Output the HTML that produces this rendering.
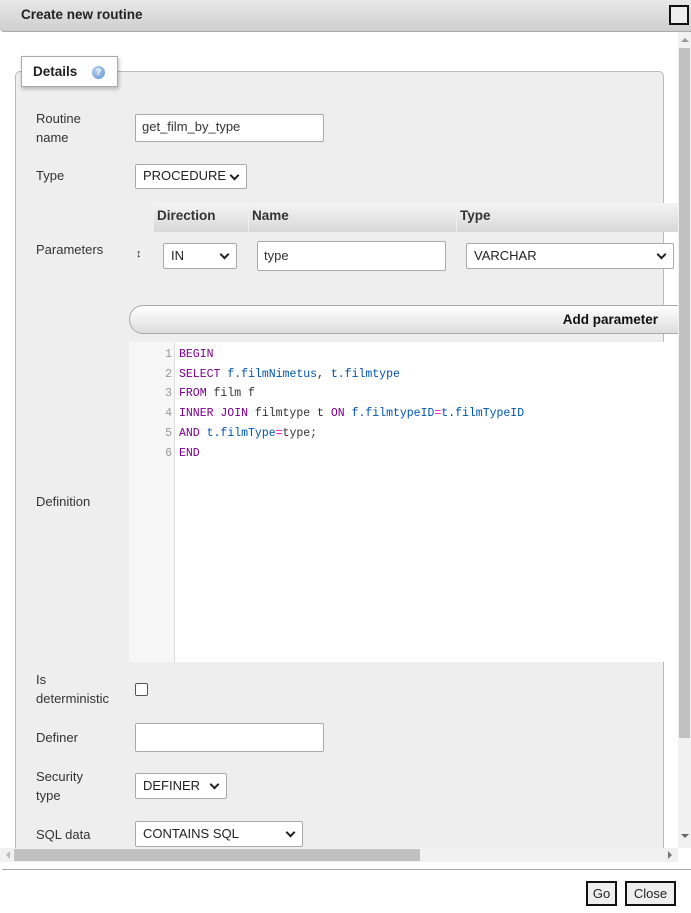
<!DOCTYPE html>
<html><head><meta charset="utf-8"><style>
*{box-sizing:border-box}
body{margin:0;width:691px;height:913px;background:#fff;font-family:"Liberation Sans","DejaVu Sans",sans-serif;font-size:13px;color:#333;position:relative;overflow:hidden}
.a{position:absolute}
.title{left:0;top:0;width:691px;height:32px;background:linear-gradient(#e8e8e8,#cfcfcf);border-bottom:1px solid #aaa;border-radius:0 0 0 4px}
.title b{position:absolute;left:21px;top:7px;font-size:13.5px;color:#222}
.closebox{left:669px;top:5px;width:20px;height:20px;border:2px solid #111;background:#eee}
.fs{left:15px;top:71px;width:649px;height:800px;background:#eee;border:1px solid #bbb;border-radius:5px}
.leg{left:21px;top:56px;width:97px;height:31px;background:#fff;border:1px solid #aaa;box-shadow:1px 2px 4px rgba(0,0,0,.25)}
.leg b{position:absolute;left:11px;top:7px;font-size:13.5px;color:#222}
.help{left:92px;top:66px;width:13px;height:13px;border-radius:50%;background:radial-gradient(circle at 40% 35%,#bcd6f5,#5b8fd3);color:#fff;font-size:9px;font-weight:bold;text-align:center;line-height:13px}
.lbl{left:36px;font-size:13px;color:#333;line-height:19px}
.inp{background:#fff;border:1px solid #aaa;border-radius:2px;font-size:13px;color:#333;padding:0 6px;line-height:24px}
.sel{background:#fff;border:1px solid #aaa;border-radius:2px;font-size:13px;color:#222;padding:0 7px;line-height:22px}
.sel:after{content:"";position:absolute;right:8px;top:7px;width:5px;height:5px;border-right:2px solid #222;border-bottom:2px solid #222;transform:rotate(45deg)}
.th{top:203px;height:29px;background:linear-gradient(#f4f4f4,#d8d8d8);font-weight:bold;font-size:13.5px;color:#333;padding:5px 0 0 3px}
.addp{left:129px;top:305px;width:560px;height:29px;border:1px solid #aaa;border-radius:14px 0 0 14px;background:linear-gradient(#fff,#ddd)}
.addp b{position:absolute;right:30px;top:6px;font-size:13.5px;color:#111}
.code{left:129px;top:342px;width:549px;height:320px;background:#fff}
.gut{left:129px;top:342px;width:46px;height:320px;background:#f7f7f7;border-right:1px solid #ddd}
.ln{font-family:"Liberation Mono","DejaVu Sans Mono",monospace;font-size:11.5px;line-height:19.7px;white-space:pre}
.k{color:#708}.v{color:#05a}.o{color:#f0c}.n{color:#222}
.btn{top:881px;height:25px;border:2px solid #111;background:#eee;font-size:13px;color:#222;text-align:center;line-height:21px}
</style></head><body>
<div class="a title"><b>Create new routine</b></div>
<div class="a closebox"></div>

<div class="a fs"></div>
<div class="a leg"><b>Details</b></div>
<div class="a help">?</div>

<div class="a lbl" style="top:109px">Routine<br>name</div>
<div class="a inp" style="left:135px;top:114px;width:189px;height:28px">get_film_by_type</div>

<div class="a lbl" style="top:166px">Type</div>
<div class="a sel" style="left:135px;top:164px;width:112px;height:25px">PROCEDURE</div>

<div class="a th" style="left:154px;width:94px">Direction</div>
<div class="a th" style="left:249px;width:207px">Name</div>
<div class="a th" style="left:457px;width:221px">Type</div>

<div class="a lbl" style="top:240px">Parameters</div>
<div class="a" style="left:136px;top:248px;font-size:11px;font-weight:bold;color:#222">↕</div>
<div class="a sel" style="left:163px;top:243px;width:74px;height:26px;line-height:24px">IN</div>
<div class="a inp" style="left:257px;top:241px;width:189px;height:30px;line-height:28px">type</div>
<div class="a sel" style="left:466px;top:243px;width:208px;height:26px;line-height:24px">VARCHAR</div>

<div class="a addp"><b>Add parameter</b></div>

<div class="a code"></div>
<div class="a gut"></div>
<div class="a ln" style="left:129px;top:345px;width:43px;text-align:right;color:#999">1
2
3
4
5
6</div>
<div class="a ln" style="left:179px;top:345px"><span class="k">BEGIN</span>
<span class="k">SELECT</span> <span class="v">f.filmNimetus</span>, <span class="v">t.filmtype</span>
<span class="k">FROM</span> film f
<span class="k">INNER JOIN</span> filmtype t <span class="k">ON</span> <span class="v">f.filmtypeID</span><span class="o">=</span><span class="v">t.filmTypeID</span>
<span class="k">AND</span> <span class="v">t.filmType</span><span class="o">=</span>type;
<span class="k">END</span></div>

<div class="a lbl" style="top:492px">Definition</div>

<div class="a lbl" style="top:670px">Is<br>deterministic</div>
<div class="a" style="left:135px;top:683px;width:13px;height:13px;border:1px solid #555;border-radius:2px;background:#fff"></div>

<div class="a lbl" style="top:728px">Definer</div>
<div class="a inp" style="left:135px;top:723px;width:189px;height:29px"></div>

<div class="a lbl" style="top:767px">Security<br>type</div>
<div class="a sel" style="left:135px;top:773px;width:92px;height:26px;line-height:24px">DEFINER</div>

<div class="a lbl" style="top:825px">SQL data<br>access</div>
<div class="a sel" style="left:135px;top:821px;width:168px;height:26px;line-height:24px">CONTAINS SQL</div>

<!-- scrollbars -->
<div class="a" style="left:678px;top:32px;width:13px;height:816px;background:#f1f1f1"></div>
<div class="a" style="left:679px;top:48px;width:11px;height:690px;background:#c1c1c1"></div>
<div class="a" style="left:681px;top:38px;width:0;height:0;border:4px solid transparent;border-bottom:4px solid #999;border-top:0"></div>
<div class="a" style="left:681px;top:834px;width:0;height:0;border:4px solid transparent;border-top:4px solid #666;border-bottom:0"></div>
<div class="a" style="left:0;top:848px;width:678px;height:14px;background:#f1f1f1"></div>
<div class="a" style="left:14px;top:849px;width:406px;height:12px;background:#c1c1c1"></div>
<div class="a" style="left:6px;top:851px;border:4px solid transparent;border-right:4px solid #bbb;border-left:0"></div>
<div class="a" style="left:668px;top:851px;border:4px solid transparent;border-left:4px solid #777;border-right:0"></div>
<div class="a" style="left:0;top:862px;width:691px;height:51px;background:#fff"></div>
<div class="a" style="left:2px;top:869px;width:689px;height:1px;background:#aaa"></div>

<div class="a btn" style="left:586px;width:31px">Go</div>
<div class="a btn" style="left:625px;width:51px">Close</div>
</body></html>
